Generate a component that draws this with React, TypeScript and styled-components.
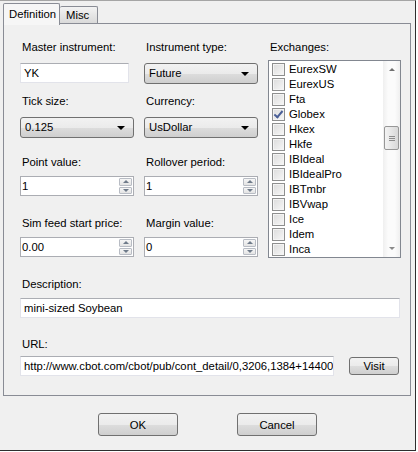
import * as React from 'react';
import styled, { createGlobalStyle, css } from 'styled-components';

const GlobalStyle = createGlobalStyle`
  html, body {
    margin: 0;
    padding: 0;
    background: #ffffff;
  }
  body {
    font-family: "Liberation Sans", Arial, sans-serif;
    font-size: 11.3px;
    color: #000;
  }
`;

const exchanges = [
  'EurexSW', 'EurexUS', 'Fta', 'Globex', 'Hkex', 'Hkfe', 'IBIdeal',
  'IBIdealPro', 'IBTmbr', 'IBVwap', 'Ice', 'Idem', 'Inca',
];

const Window = styled.div`
  width: 416px;
  height: 451px;
  box-sizing: border-box;
  background: #f0f0f0;
  border-top: 1px solid #a5a5a5;
  border-right: 1px solid #2e2e2e;
  border-bottom: 1px solid #2e2e2e;
  padding: 2px 0 0 3px;
`;

const TabStrip = styled.div`
  display: flex;
  align-items: flex-end;
  height: 20px;
  position: relative;
  z-index: 1;
`;

const Tab = styled.div<{ $active?: boolean }>`
  box-sizing: border-box;
  border: 1px solid #898c95;
  border-bottom: none;
  border-radius: 2px 2px 0 0;
  padding: 0 5px;
  line-height: 16px;
  ${({ $active }) => $active
    ? css`
      height: 22px;
      margin-bottom: -2px;
      padding-top: 2px;
      background: #f6f6f6;
      width: 57px;
    `
    : css`
      height: 17px;
      border-left: none;
      background: linear-gradient(#f3f3f3, #e6e6e6 50%, #dadada);
      width: 38px;
      padding-left: 6px;
    `}
`;

const Panel = styled.div`
  box-sizing: border-box;
  width: 408px;
  height: 373px;
  border: 1px solid #898c95;
  background: #f0f0f0;
  padding: 16px 0 0 16px;
`;

const Top = styled.div`
  display: flex;
  gap: 10px;
`;

const LeftGrid = styled.div`
  display: grid;
  grid-template-columns: 114px 114px;
  column-gap: 10px;
  align-content: start;
`;

const Field = styled.div<{ $mt?: number; $gap?: number }>`
  display: flex;
  flex-direction: column;
  margin-top: ${({ $mt }) => $mt ?? 0}px;
  & > label {
    margin-bottom: ${({ $gap }) => $gap ?? 8}px;
  }
`;

const Label = styled.label`
  display: block;
  height: 15px;
  line-height: 15px;
  padding-left: 2px;
  white-space: nowrap;
`;

const TextBox = styled.div<{ $w?: number }>`
  box-sizing: border-box;
  width: ${({ $w }) => ($w ? `${$w}px` : '100%')};
  height: 20px;
  background: #fff;
  border: 1px solid #e2e3ea;
  border-top-color: #abadb3;
  line-height: 18px;
  padding-left: 3px;
  white-space: nowrap;
  overflow: hidden;
  text-overflow: clip;
`;

const Combo = styled.div`
  box-sizing: border-box;
  position: relative;
  width: 114px;
  height: 21px;
  border: 1px solid #707070;
  border-radius: 3px;
  background: linear-gradient(#f2f2f2, #ebebeb 50%, #dddddd 51%, #cfcfcf);
  line-height: 19px;
  padding-left: 4px;
`;

const ComboArrow = styled.span`
  position: absolute;
  right: 8px;
  top: 8px;
  width: 0;
  height: 0;
  border-left: 4px solid transparent;
  border-right: 4px solid transparent;
  border-top: 4px solid #000;
`;

const SpinBox = styled(TextBox)`
  position: relative;
  padding-left: 1px;
  border-color: #abadb3;
  border-top-color: #abadb3;
`;

const SpinButtons = styled.div`
  position: absolute;
  right: 1px;
  top: 1px;
  bottom: 1px;
  width: 13px;
  display: flex;
  flex-direction: column;
  gap: 1px;
`;

const SpinBtn = styled.div<{ $down?: boolean }>`
  flex: 1;
  box-sizing: border-box;
  border: 1px solid #b8bcc4;
  border-radius: 1px;
  background: linear-gradient(#f6f6f6, #e4e4e4);
  display: flex;
  align-items: center;
  justify-content: center;
  &::after {
    content: '';
    border-left: 3px solid transparent;
    border-right: 3px solid transparent;
    ${({ $down }) => $down
      ? css`border-top: 3px solid #6f7b8a;`
      : css`border-bottom: 3px solid #6f7b8a;`}
  }
`;

const ExchangeCol = styled.div`
  display: flex;
  flex-direction: column;
  width: 133px;
  & > label {
    margin-bottom: 5px;
  }
`;

const ListBox = styled.div`
  box-sizing: border-box;
  width: 133px;
  height: 198px;
  border: 1px solid #828790;
  background: #fff;
  display: flex;
`;

const Items = styled.div`
  flex: 1;
  padding: 1px 0 0 3px;
`;

const Item = styled.div`
  display: flex;
  align-items: center;
  gap: 4px;
  height: 15px;
  line-height: 15px;
`;

const Check = styled.span<{ $checked?: boolean }>`
  box-sizing: border-box;
  width: 13px;
  height: 13px;
  border: 1px solid #8e8f8f;
  background: linear-gradient(135deg, #dcdcdc, #f7f7f7);
  box-shadow: inset 0 0 0 1px #f4f4f4;
  position: relative;
  ${({ $checked }) => $checked && css`
    &::after {
      content: '';
      position: absolute;
      left: 3px;
      top: 0px;
      width: 3px;
      height: 7px;
      border-right: 2px solid #4a5f97;
      border-bottom: 2px solid #4a5f97;
      transform: rotate(40deg);
    }
  `}
`;

const ScrollBar = styled.div`
  width: 17px;
  background: linear-gradient(90deg, #efefef, #fbfbfb 30%, #fbfbfb 70%, #efefef);
  display: flex;
  flex-direction: column;
  align-items: center;
`;

const ScrollArrow = styled.div<{ $down?: boolean }>`
  height: 17px;
  width: 17px;
  display: flex;
  align-items: center;
  justify-content: center;
  &::after {
    content: '';
    border-left: 3px solid transparent;
    border-right: 3px solid transparent;
    ${({ $down }) => $down
      ? css`border-top: 3px solid #8a8a8a;`
      : css`border-bottom: 3px solid #707070;`}
  }
`;

const Track = styled.div`
  flex: 1;
  width: 100%;
  display: flex;
  justify-content: center;
`;

const Thumb = styled.div`
  box-sizing: border-box;
  margin-top: 48px;
  width: 15px;
  height: 24px;
  border: 1px solid #979797;
  border-radius: 2px;
  background: linear-gradient(90deg, #f3f3f3, #e6e6e6 50%, #d8d8d8);
  display: flex;
  flex-direction: column;
  align-items: center;
  justify-content: center;
  gap: 1px;
  & > span {
    width: 6px;
    height: 1px;
    background: #8c8c8c;
  }
`;

const UrlRow = styled.div`
  display: flex;
  align-items: center;
  gap: 15px;
`;

const Button = styled.button<{ $w: number; $h: number }>`
  box-sizing: border-box;
  width: ${({ $w }) => $w}px;
  height: ${({ $h }) => $h}px;
  border: 1px solid #707070;
  border-radius: 3px;
  background: linear-gradient(#f2f2f2, #ebebeb 50%, #dddddd 51%, #cfcfcf);
  font-family: "Liberation Sans", Arial, sans-serif;
  font-size: 11.3px;
  color: #000;
  padding: 0;
`;

const ButtonRow = styled.div`
  display: flex;
  justify-content: center;
  gap: 59px;
  margin-top: 17px;
  padding-right: 3px;
`;

const Spin = ({ value }: { value: string }) => (
  <SpinBox>
    {value}
    <SpinButtons>
      <SpinBtn />
      <SpinBtn $down />
    </SpinButtons>
  </SpinBox>
);

const Select = ({ value }: { value: string }) => (
  <Combo>
    {value}
    <ComboArrow />
  </Combo>
);

export default function App() {
  return (
    <>
      <GlobalStyle />
      <Window>
        <TabStrip>
          <Tab $active>Definition</Tab>
          <Tab>Misc</Tab>
        </TabStrip>
        <Panel>
          <Top>
            <LeftGrid>
              <Field>
                <Label>Master instrument:</Label>
                <TextBox $w={109}>YK</TextBox>
              </Field>
              <Field>
                <Label>Instrument type:</Label>
                <Select value="Future" />
              </Field>
              <Field $mt={10}>
                <Label>Tick size:</Label>
                <Select value="0.125" />
              </Field>
              <Field $mt={10}>
                <Label>Currency:</Label>
                <Select value="UsDollar" />
              </Field>
              <Field $mt={17} $gap={6}>
                <Label>Point value:</Label>
                <Spin value="1" />
              </Field>
              <Field $mt={17} $gap={6}>
                <Label>Rollover period:</Label>
                <Spin value="1" />
              </Field>
              <Field $mt={20} $gap={6}>
                <Label>Sim feed start price:</Label>
                <Spin value="0.00" />
              </Field>
              <Field $mt={20} $gap={6}>
                <Label>Margin value:</Label>
                <Spin value="0" />
              </Field>
            </LeftGrid>
            <ExchangeCol>
              <Label>Exchanges:</Label>
              <ListBox>
                <Items>
                  {exchanges.map((name) => (
                    <Item key={name}>
                      <Check $checked={name === 'Globex'} />
                      {name}
                    </Item>
                  ))}
                </Items>
                <ScrollBar>
                  <ScrollArrow />
                  <Track>
                    <Thumb>
                      <span />
                      <span />
                      <span />
                    </Thumb>
                  </Track>
                  <ScrollArrow $down />
                </ScrollBar>
              </ListBox>
            </ExchangeCol>
          </Top>
          <Field $mt={19} $gap={6}>
            <Label>Description:</Label>
            <TextBox $w={380}>mini-sized Soybean</TextBox>
          </Field>
          <Field $mt={19} $gap={4}>
            <Label>URL:</Label>
            <UrlRow>
              <TextBox $w={314}>http://www.cbot.com/cbot/pub/cont_detail/0,3206,1384+14400</TextBox>
              <Button $w={50} $h={18}>Visit</Button>
            </UrlRow>
          </Field>
        </Panel>
        <ButtonRow>
          <Button $w={80} $h={23}>OK</Button>
          <Button $w={80} $h={23}>Cancel</Button>
        </ButtonRow>
      </Window>
    </>
  );
}
